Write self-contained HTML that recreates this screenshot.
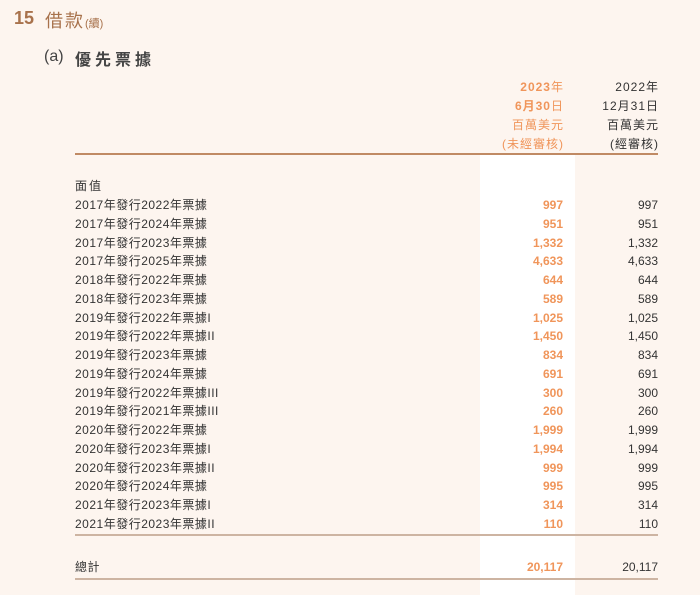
<!DOCTYPE html>
<html><head><meta charset="utf-8"><style>
body{margin:0;width:700px;height:593px;background:#fdf5ef;position:relative;overflow:hidden;font-family:"Liberation Sans","Noto Sans CJK TC",sans-serif;color:#333}
.a{position:absolute;white-space:nowrap}
.wc{position:absolute;left:480px;top:155px;width:95px;height:440px;background:#fff}
.r{position:absolute;left:75px;width:583px;height:19px;font-size:12px;line-height:19px;letter-spacing:0.5px}
.r .o{position:absolute;right:95px;color:#f0955a;font-weight:bold;letter-spacing:0}
.r .k{position:absolute;right:0;color:#333;letter-spacing:0}
.h{position:absolute;font-size:12px;text-align:right;width:120px;letter-spacing:1px}
</style></head><body>
<div class="wc"></div>
<div class="a" style="left:14px;top:8px;font-size:18px;font-weight:bold;color:#a8724c">15</div>
<div class="a" style="left:45px;top:7px;font-size:18px;color:#a8724c;letter-spacing:2px">借款<span style="font-size:11px;letter-spacing:0">(續)</span></div>
<div class="a" style="left:44px;top:48px;font-size:16px;color:#444">(a)</div>
<div class="a" style="left:75px;top:46px;font-size:16px;color:#444;font-weight:bold;letter-spacing:4px">優先票據</div>
<div class="h" style="left:444px;top:78px;color:#f0955a;font-weight:bold">2023<span style="font-weight:normal">年</span></div>
<div class="h" style="left:444px;top:97px;color:#f0955a;font-weight:bold">6月30<span style="font-weight:normal">日</span></div>
<div class="h" style="left:444px;top:116px;color:#f0955a">百萬美元</div>
<div class="h" style="left:444px;top:135px;color:#f0955a">(未經審核)</div>
<div class="h" style="left:539px;top:78px">2022年</div>
<div class="h" style="left:539px;top:97px">12月31日</div>
<div class="h" style="left:539px;top:116px">百萬美元</div>
<div class="h" style="left:539px;top:135px">(經審核)</div>
<div class="a" style="left:75px;top:153px;width:583px;height:2px;background:#c08a64"></div>
<div class="r" style="top:177px"><span style="letter-spacing:2px">面值</span></div>
<div id="rows"></div>
<div class="a" style="left:75px;top:534px;width:583px;height:2px;background:#cdb4a2"></div>
<div class="r" style="top:558px">總計<span class="o">20,117</span><span class="k">20,117</span></div>
<div class="a" style="left:75px;top:578px;width:583px;height:2px;background:#cdb4a2"></div>
<script>
var d=[["2017年發行2022年票據","997"],["2017年發行2024年票據","951"],["2017年發行2023年票據","1,332"],["2017年發行2025年票據","4,633"],["2018年發行2022年票據","644"],["2018年發行2023年票據","589"],["2019年發行2022年票據I","1,025"],["2019年發行2022年票據II","1,450"],["2019年發行2023年票據","834"],["2019年發行2024年票據","691"],["2019年發行2022年票據III","300"],["2019年發行2021年票據III","260"],["2020年發行2022年票據","1,999"],["2020年發行2023年票據I","1,994"],["2020年發行2023年票據II","999"],["2020年發行2024年票據","995"],["2021年發行2023年票據I","314"],["2021年發行2023年票據II","110"]];
var h="";d.forEach(function(x,i){h+='<div class="r" style="top:'+(196+i*18.75)+'px">'+x[0]+'<span class="o">'+x[1]+'</span><span class="k">'+x[1]+'</span></div>'});
document.getElementById("rows").innerHTML=h;
</script>
</body></html>
